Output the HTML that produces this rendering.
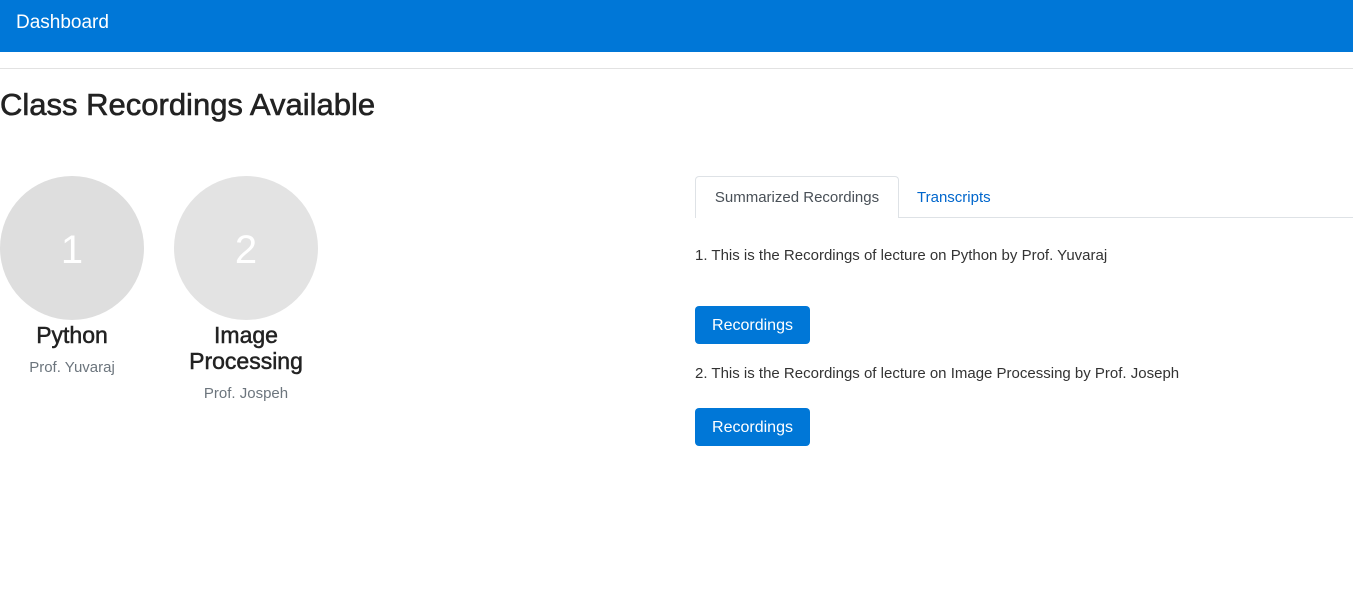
<!DOCTYPE html>
<html><head><meta charset="utf-8"><style>
*{margin:0;padding:0;box-sizing:border-box}
body{width:1353px;height:599px;background:#fff;font-family:"Liberation Sans",sans-serif;color:#212529;position:relative;overflow:hidden}
.nav{position:absolute;left:0;top:0;width:1353px;height:52px;background:#0077d7}
.nav span{position:absolute;left:16px;top:12px;color:#fff;font-size:19px}
.hr{position:absolute;left:0;top:68px;width:1353px;height:1px;background:#e2e2e2}
h1{position:absolute;left:0;top:87px;font-size:31px;font-weight:normal;color:#222;-webkit-text-stroke:0.6px #222}
.c{position:absolute;width:144px;height:144px;border-radius:50%;background:#dedede;color:#fff;font-size:40px;text-align:center;line-height:148px}
.t{position:absolute;font-size:23px;text-align:center;color:#222;line-height:26px;-webkit-text-stroke:0.5px #222}
.s{position:absolute;font-size:15px;color:#6c757d;text-align:center}
.tabline{position:absolute;left:695px;top:217px;width:658px;height:1px;background:#dee2e6}
.tab{position:absolute;left:695px;top:176px;width:204px;height:42px;border:1px solid #dee2e6;border-bottom:none;border-radius:4px 4px 0 0;background:#fff;font-size:15px;color:#495057;text-align:center;line-height:42px}
.tab2{position:absolute;left:917px;top:189px;font-size:15px;color:#0066cc}
.p{position:absolute;left:695px;font-size:15px;color:#333}
.btn{position:absolute;left:695px;width:115px;height:38px;background:#0077d7;color:#fff;border-radius:4px;font-size:16px;text-align:center;line-height:39px}
</style></head><body>
<div class="nav"><span>Dashboard</span></div>
<div class="hr"></div>
<h1>Class Recordings Available</h1>
<div class="c" style="left:0;top:176px">1</div>
<div class="c" style="left:174px;top:176px;background:#e3e3e3">2</div>
<div class="t" style="left:0;width:144px;top:322px">Python</div>
<div class="s" style="left:0;width:144px;top:359px">Prof. Yuvaraj</div>
<div class="t" style="left:174px;width:144px;top:322px">Image<br>Processing</div>
<div class="s" style="left:174px;width:144px;top:385px">Prof. Jospeh</div>
<div class="tabline"></div>
<div class="tab">Summarized Recordings</div>
<div class="tab2">Transcripts</div>
<div class="p" style="top:247px">1. This is the Recordings of lecture on Python by Prof. Yuvaraj</div>
<div class="btn" style="top:306px">Recordings</div>
<div class="p" style="top:365px">2. This is the Recordings of lecture on Image Processing by Prof. Joseph</div>
<div class="btn" style="top:408px">Recordings</div>
</body></html>
